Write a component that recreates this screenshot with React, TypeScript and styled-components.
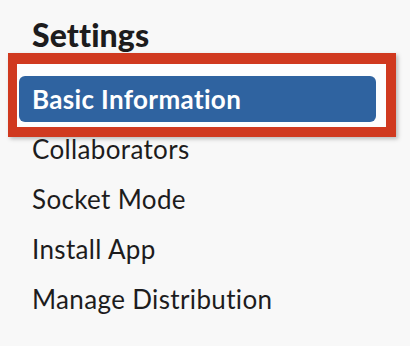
import styled, { createGlobalStyle } from "styled-components";

const items = [
  { label: "Basic Information", active: true },
  { label: "Collaborators" },
  { label: "Socket Mode" },
  { label: "Install App" },
  { label: "Manage Distribution" },
];

const GlobalStyle = createGlobalStyle`
  html, body {
    margin: 0;
    padding: 0;
    background: #f8f8f8;
  }
  body {
    font-family: Lato, "Open Sans", sans-serif;
    color: #1d1c1d;
  }
`;

export default function App() {
  return (
    <>
      <GlobalStyle />
      <Sidebar>
        <Heading>Settings</Heading>
        <NavList>
          {items.map((item) => (
            <NavRow key={item.label}>
              {item.active && <Callout />}
              <NavItem $active={!!item.active} href="#">
                {item.label}
              </NavItem>
            </NavRow>
          ))}
        </NavList>
      </Sidebar>
    </>
  );
}

const Sidebar = styled.nav`
  width: 357px;
  padding: 17px 0 0 19px;
`;

const Heading = styled.h2`
  margin: 0 0 0 13px;
  height: 57px;
  font-size: 32px;
  line-height: 36px;
  font-weight: 900;
  letter-spacing: 0.1px;
`;

const NavList = styled.div`
  display: flex;
  flex-direction: column;
`;

const NavRow = styled.div`
  position: relative;
  height: 50px;
  display: flex;
  align-items: center;
`;

// annotation frame drawn round the active item
const Callout = styled.div`
  position: absolute;
  top: -21px;
  left: -11px;
  right: -20px;
  bottom: -13px;
  box-sizing: border-box;
  border: 10px solid #d0391f;
  border-top-width: 11px;
  border-left-width: 9px;
  background: #fdfdfd;
  box-shadow: 2px 2px 4px rgba(0, 0, 0, 0.25);
`;

const NavItem = styled.a<{ $active: boolean }>`
  position: relative;
  display: flex;
  align-items: center;
  box-sizing: border-box;
  width: 100%;
  height: 46px;
  padding: 0 13px 1px;
  border-radius: 6px;
  font-size: 26px;
  letter-spacing: 0.35px;
  font-weight: ${(p) => (p.$active ? 700 : 400)};
  color: ${(p) => (p.$active ? "#ffffff" : "#1d1c1d")};
  background: ${(p) => (p.$active ? "#2f63a0" : "transparent")};
  text-decoration: none;
`;
